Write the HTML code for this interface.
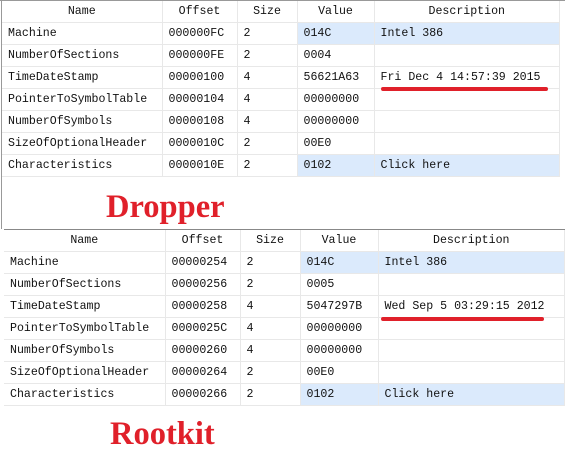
<!DOCTYPE html>
<html><head><style>
body{margin:0;width:565px;height:470px;background:#fff;position:relative;overflow:hidden;font-family:"Liberation Mono",monospace;font-size:11.6px;color:#111}
.t{position:absolute;border-collapse:collapse;table-layout:fixed}
.t td{height:21px;padding:0 0 0 6px;border-right:1px solid #e8e8e8;border-bottom:1px solid #e8e8e8;white-space:nowrap;overflow:hidden}
.t tr.h td{text-align:center;padding:0;background:#fff}
.s{background:#dbeafc}
.lbl{position:absolute;font-family:"Liberation Serif",serif;font-weight:bold;color:#e0202a;font-size:32.5px}
.u{position:absolute;height:4px;background:#e0202a;border-radius:2px}
</style></head><body>
<div style="position:absolute;left:0;top:0;width:565px;height:1px;background:#999"></div>
<div style="position:absolute;left:1px;top:0;width:1px;height:229px;background:#999"></div>
<table class="t" style="left:2px;top:1px;width:558px">
<colgroup><col style="width:160px"><col style="width:75px"><col style="width:60px"><col style="width:77px"><col></colgroup>
<tr class="h"><td>Name</td><td>Offset</td><td>Size</td><td>Value</td><td>Description</td></tr>
<tr><td>Machine</td><td>000000FC</td><td>2</td><td class="s">014C</td><td class="s">Intel 386</td></tr>
<tr><td>NumberOfSections</td><td>000000FE</td><td>2</td><td>0004</td><td></td></tr>
<tr><td>TimeDateStamp</td><td>00000100</td><td>4</td><td>56621A63</td><td>Fri Dec 4 14:57:39 2015</td></tr>
<tr><td>PointerToSymbolTable</td><td>00000104</td><td>4</td><td>00000000</td><td></td></tr>
<tr><td>NumberOfSymbols</td><td>00000108</td><td>4</td><td>00000000</td><td></td></tr>
<tr><td>SizeOfOptionalHeader</td><td>0000010C</td><td>2</td><td>00E0</td><td></td></tr>
<tr><td>Characteristics</td><td>0000010E</td><td>2</td><td class="s">0102</td><td class="s">Click here</td></tr>
</table>
<div class="u" style="left:381px;top:87px;width:167px"></div>
<div class="lbl" style="left:106px;top:189px">Dropper</div>
<div style="position:absolute;left:4px;top:229px;width:561px;height:1px;background:#888"></div>
<table class="t" style="left:4px;top:230px;width:561px">
<colgroup><col style="width:161px"><col style="width:75px"><col style="width:60px"><col style="width:78px"><col></colgroup>
<tr class="h"><td>Name</td><td>Offset</td><td>Size</td><td>Value</td><td>Description</td></tr>
<tr><td>Machine</td><td>00000254</td><td>2</td><td class="s">014C</td><td class="s">Intel 386</td></tr>
<tr><td>NumberOfSections</td><td>00000256</td><td>2</td><td>0005</td><td></td></tr>
<tr><td>TimeDateStamp</td><td>00000258</td><td>4</td><td>5047297B</td><td>Wed Sep 5 03:29:15 2012</td></tr>
<tr><td>PointerToSymbolTable</td><td>0000025C</td><td>4</td><td>00000000</td><td></td></tr>
<tr><td>NumberOfSymbols</td><td>00000260</td><td>4</td><td>00000000</td><td></td></tr>
<tr><td>SizeOfOptionalHeader</td><td>00000264</td><td>2</td><td>00E0</td><td></td></tr>
<tr><td>Characteristics</td><td>00000266</td><td>2</td><td class="s">0102</td><td class="s">Click here</td></tr>
</table>
<div class="u" style="left:381px;top:317px;width:163px"></div>
<div class="lbl" style="left:110px;top:416px">Rootkit</div>
</body></html>
